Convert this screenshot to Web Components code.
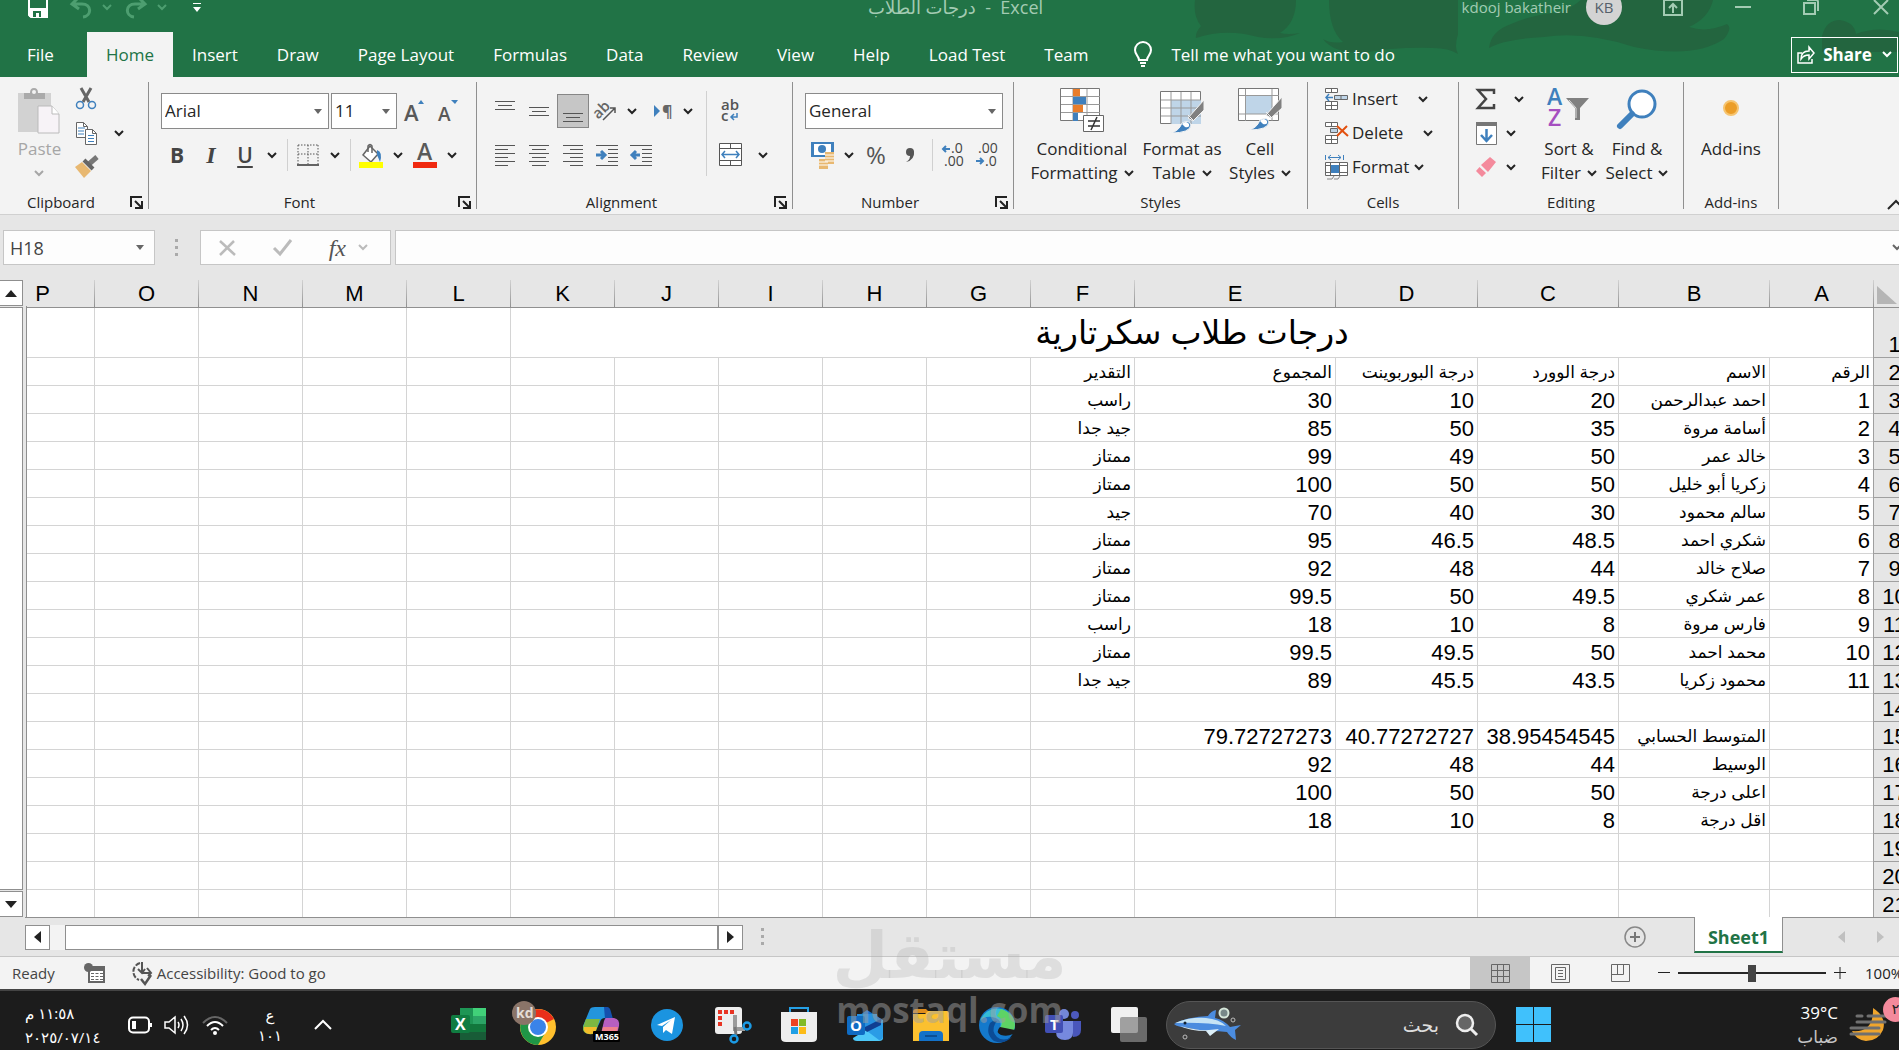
<!DOCTYPE html>
<html lang="en">
<head>
<meta charset="utf-8">
<title>درجات الطلاب - Excel</title>
<style>
    html, body { margin: 0; height: 100%; overflow: hidden; }
    body {
        display: flex;
        flex-direction: column;
        position: relative;
        background: #e6e6e6;
        color: #262626;
        font: 17px/24px "Open Sans", "Noto Sans", "DejaVu Sans", sans-serif;
    }
    work-sheet { flex: 1; min-height: 0; }
</style>
</head>
<body>
<excel-header></excel-header>
<excel-ribbon></excel-ribbon>
<formula-bar cell="H18"></formula-bar>
<work-sheet></work-sheet>
<sheet-tabs>Sheet1</sheet-tabs>
<status-bar></status-bar>
<task-bar></task-bar>
<water-mark></water-mark>

<script>
// name: [width, height, svg content]
const ICONS = {
    chevron: [10, 7, '<path d="M1 1l4 4 4-4" fill="none" stroke="currentColor" stroke-width="2"/>'],
    up: [18, 11, '<path d="M1 10l8-8 8 8" fill="none" stroke="currentColor" stroke-width="2"/>'],
    triangle: [8, 5, '<path d="M0 0h8L4 5z" fill="currentColor"/>'],
    triup: [12, 7, '<path d="M0 7h12L6 0z" fill="#222"/>'],
    tridown: [12, 7, '<path d="M0 0h12L6 7z" fill="#222"/>'],
    trileft: [7, 12, '<path d="M7 0v12L0 6z" fill="currentColor"/>'],
    triright: [7, 12, '<path d="M0 0v12l7-6z" fill="currentColor"/>'],
    launcher: [13, 13, '<path d="M1 11V1h11M5 5l6 6M12 5v7H5" fill="none" stroke="#222" stroke-width="2"/>'],
    dots: [3, 18, '<path d="M0 0h3v3H0zM0 7h3v3H0zM0 14h3v3H0z" fill="#aaa"/>'],
    save: [20, 22, '<path d="M1 1h18v20H3l-2-2z" fill="none" stroke="#fff" stroke-width="2"/><path d="M1 12h18v9H1z" fill="#fff"/><path d="M5 15h8v6h-2v-4H8v4H5z" fill="#217346"/>'],
    undo: [22, 22, '<path d="M9 1L2 8l7 5M3 8h9c10 0 10 12 1 13" fill="none" stroke="#4d9e70" stroke-width="3"/>'],
    redo: [22, 22, '<path d="M13 1l7 7-7 5M19 8h-9C0 8 0 20 9 21" fill="none" stroke="#4d9e70" stroke-width="3"/>'],
    custom: [8, 9, '<path d="M0 0h8v1H0zM0 4h8L4 9z" fill="#fff"/>'],
    ribbonopt: [20, 17, '<path d="M1 1h18v15H1zM10 14V6M6 9l4-4 4 4" fill="none" stroke="#a3cbb3" stroke-width="2"/>'],
    minimize: [16, 2, '<path d="M0 0h16v2H0z" fill="#a3cbb3"/>'],
    restore: [16, 16, '<path d="M1 4h11v11H1zM4 1h9q2 0 2 2v9" fill="none" stroke="#a3cbb3" stroke-width="2"/>'],
    close: [16, 16, '<path d="M1 1l14 14M15 1L1 15" fill="none" stroke="#a3cbb3" stroke-width="2"/>'],
    bulb: [18, 25, '<path d="M5 18c0-4-4-5-4-10a8 8 0 0 1 16 0c0 5-4 6-4 10zM6 21h6M7 24h4" fill="none" stroke="#fff" stroke-width="2"/>'],
    share: [18, 18, '<path d="M5 7H1v10h14v-4M4 13c0-5 3-8 8-8V1l5 6-5 6V9c-4 0-6 1-8 4z" fill="none" stroke="#fff" stroke-width="1.5"/>'],
    paste: [42, 46, '<path d="M0 5h33v39H0z" fill="#d2d2d2"/><path d="M6 11V5h6q0-5 4-5t4 5h7v6z" fill="#aaa"/><circle cx="16" cy="4" r="2" fill="#f3f3f3"/><path d="M20 18h14l7 8v19H20z" fill="#f7f3f7" stroke="#bbb"/><path d="M34 18v8h7" fill="#fff" stroke="#bbb"/>'],
    cut: [20, 22, '<path d="M5 0l8 14M15 0L7 14" stroke="#666" stroke-width="3"/><circle cx="4" cy="17" r="3.5" fill="none" stroke="#3f80bd" stroke-width="1.5"/><circle cx="16" cy="17" r="3.5" fill="none" stroke="#3f80bd" stroke-width="1.5"/>'],
    copy: [21, 23, '<path d="M.5.5h7l4 4v11H.5z" fill="#fff" stroke="#666"/><path d="M7.500.5v4h4" fill="none" stroke="#666"/><path d="M2 6h7M2 9h6M2 12h6" stroke="#3f80bd"/><path d="M9.500 7.500h7l4 4v11h-11z" fill="#fff" stroke="#666"/><path d="M16.500 7.500v4h4" fill="none" stroke="#666"/><path d="M12 13.500h6M12 16.500h6M12 19.500h6" stroke="#3f80bd"/>'],
    brush: [23, 22, '<path d="M22 1l-8 7" stroke="#777" stroke-width="5"/><path d="M9 4l9 9" stroke="#666" stroke-width="4"/><path d="M0 11l7-5 9 9-7 7z" fill="#e8b871"/>'],
    grow: [20, 22, '<text x="0" y="21" font-size="22" font-weight="600" fill="#595959">A</text><path d="M14 4h6l-3-4z" fill="#3f80bd"/>'],
    shrink: [20, 22, '<text x="0" y="21" font-size="19" font-weight="600" fill="#595959">A</text><path d="M13 0h7l-3 4z" fill="#3f80bd"/>'],
    borders: [22, 22, '<path d="M1 1h20M1 10h20M1 1v19M11 1v19M21 1v19" fill="none" stroke="#555" stroke-dasharray="1.500 1.500"/><path d="M0 21h22" stroke="#333" stroke-width="1.500"/>'],
    fill: [24, 25, '<path d="M11 3l8 8-7 8-8-7z" fill="#fff" stroke="#666" stroke-width="1.500"/><path d="M9 9V3q2-3 4 0v7" fill="none" stroke="#666" stroke-width="1.500"/><path d="M18 7q6 2 3 12-2-5-3-7z" fill="#3f80bd"/><path d="M0 19h24v6H0z" fill="#ff0"/>'],
    fontcolor: [24, 25, '<text x="4" y="17" font-size="23" font-weight="600" fill="#595959">A</text><path d="M0 19h24v6H0z" fill="#f0290f"/>'],
    top: [20, 36, '<path d="M0 8.500h20M3 12.500h14M0 16.500h20" stroke="#555"/>'],
    middle: [20, 36, '<path d="M0 14.500h20M3 18.500h14M0 22.500h20" stroke="#555"/>'],
    bottom: [20, 34, '<path d="M0 19.500h20M3 23.500h14M0 27.500h20" stroke="#555"/>'],
    left: [20, 22, '<path d="M0 1.500h20M0 5.500h13M0 9.500h20M0 13.500h13M0 17.500h20M0 21.500h13" stroke="#555"/>'],
    center: [20, 22, '<path d="M0 1.500h20M3 5.500h14M0 9.500h20M3 13.500h14M0 17.500h20M3 21.500h14" stroke="#555"/>'],
    right: [20, 22, '<path d="M0 1.500h20M7 5.500h13M0 9.500h20M7 13.500h13M0 17.500h20M7 21.500h13" stroke="#555"/>'],
    indent: [22, 22, '<path d="M0 1.500h22M12 5.500h10M12 9.500h10M12 13.500h10M12 17.500h10M0 21.500h22" stroke="#555"/><path d="M0 11h8M5 7l4 4-4 4" fill="none" stroke="#3f80bd" stroke-width="3"/>'],
    outdent: [22, 22, '<path d="M0 1.500h22M12 5.500h10M12 9.500h10M12 13.500h10M12 17.500h10M0 21.500h22" stroke="#555"/><path d="M2 11h8M6 7l-4 4 4 4" fill="none" stroke="#3f80bd" stroke-width="3"/>'],
    orient: [22, 22, '<text transform="rotate(-45 8 14)" x="0" y="14" font-size="15" font-weight="600" fill="#666">ab</text><path d="M7 20L19 8M14 8h5v5" fill="none" stroke="#555" stroke-width="1.500"/>'],
    direction: [18, 15, '<path d="M0 1v12l6-6z" fill="#3f80bd"/><text x="8" y="13" font-size="16" font-weight="700" fill="#666">¶</text>'],
    wrap: [18, 24, '<text x="0" y="11" font-size="15" font-weight="600" fill="#555">ab</text><text x="0" y="22" font-size="15" font-weight="600" fill="#555">c</text><path d="M16 14v4h-5M13 15l-3 3 3 3" fill="none" stroke="#3f80bd" stroke-width="1.500"/>'],
    merge: [23, 24, '<path d="M.5.500h22v22H.5zM.5 5.500h22M.5 17.500h22M11.500.500v5M11.500 17.500v5" fill="#fff" stroke="#555"/><path d="M3 11.500h17M6 8l-3 3.500L6 15M17 8l3 3.500-3 3.500" fill="none" stroke="#3f80bd" stroke-width="1.500"/>'],
    currency: [23, 28, '<path d="M0 1h23v15H0z" fill="#3f80bd"/><path d="M3 3h17v11H3z" fill="#fff"/><circle cx="11" cy="8" r="4" fill="#3f80bd"/><path d="M14 11h9v12h-9zM8 18h9v10H8z" fill="#e8b871"/><path d="M14 14h9M14 17h9M14 20h9M8 21h9M8 24h9" stroke="#fff"/>'],
    percent: [20, 22, '<text x="0" y="20" font-size="24" font-weight="400" fill="#555">%</text>'],
    comma: [10, 16, '<circle cx="5" cy="5" r="4" fill="#555"/><path d="M9 4q1 9-8 11 5-3 4-8z" fill="#555"/>'],
    incdec: [22, 24, '<path d="M1 6h7M4 3L1 6l3 3" fill="none" stroke="#3f80bd" stroke-width="2"/><text x="9" y="10" font-size="14" fill="#444">.0</text><text x="2" y="23" font-size="14" fill="#444">.00</text>'],
    decdec: [22, 24, '<path d="M0 18h7M4 15l3 3-3 3" fill="none" stroke="#3f80bd" stroke-width="2"/><text x="2" y="10" font-size="14" fill="#444">.00</text><text x="9" y="23" font-size="14" fill="#444">.0</text>'],
    conditional: [44, 45, '<path d="M.5.500h39v32H.5z" fill="#fff" stroke="#777"/><path d="M13 1v32M27 1v32M1 8.500h39M1 16.500h39M1 24.500h39" stroke="#999"/><path d="M13 1h7v7h-7zM13 17h10v7H13z" fill="#e87d2b"/><path d="M13 9h13v7H13zM13 25h5v8h-5z" fill="#3f80bd"/><path d="M23.500 27.500h20v16h-20z" fill="#fff" stroke="#666"/><path d="M28 33h12M28 38h12M37 29l-6 13" stroke="#333" stroke-width="1.500"/>'],
    table: [45, 45, '<path d="M.5 3.500h40v32H.5z" fill="#fff" stroke="#777"/><path d="M11 12h30v24H11z" fill="#bfd5e8"/><path d="M11 4v32M21 4v32M31 4v32M1 12h40M1 20h40M1 28h40" stroke="#999"/><path d="M44 12L28 30l5 3L44 22z" fill="#808080" stroke="#f3f3f3"/><path d="M28 27l6 6" stroke="#f3f3f3"/><path d="M11 45q8-2 11-10 7-4 9 2-1 8-20 8z" fill="#3f80bd" stroke="#f3f3f3"/><path d="M22 36q4-4 7 0 1 4-4 3z" fill="#fff"/>'],
    cellstyle: [45, 45, '<path d="M.5.500h40v32H.5z" fill="#fff" stroke="#777"/><path d="M8 8h26v18H8z" fill="#bfd5e8"/><path d="M7.500 1v32M34 1v32M1 7.500h40M1 26h40" stroke="#999"/><path d="M44 9L28 27l5 3L44 20z" fill="#808080" stroke="#f3f3f3"/><path d="M28 24l6 6" stroke="#f3f3f3"/><path d="M11 42q8-2 11-10 7-4 9 2-1 8-20 8z" fill="#3f80bd" stroke="#f3f3f3"/><path d="M22 33q4-4 7 0 1 4-4 3z" fill="#fff"/>'],
    insert: [23, 23, '<path d="M.5.500h12v4H.5zM6.500.500v4M.5 13.500h12v8H.5zM6.500 13.500v8M.5 17.500h12" fill="#fff" stroke="#666"/><path d="M9.500 7.500h13v4h-13zM16 7.500v4" fill="#bfd5e8" stroke="#666"/><path d="M1 9.500h7M4 6L1 9.500 4 13" fill="none" stroke="#3f80bd" stroke-width="1.500"/>'],
    remove: [23, 23, '<path d="M.5.500h12v4H.5zM6.500.500v4M.5 13.500h12v8H.5zM6.500 13.500v8M.5 17.500h12" fill="#fff" stroke="#666"/><path d="M5.500 6.500h7v4h-7z" fill="#bfd5e8" stroke="#666"/><path d="M12 4l11 10M22 4L12 14" stroke="#e2500f" stroke-width="2"/>'],
    format: [23, 25, '<path d="M.5 0v5M18.500 0v5M3 2.500h13M6 0L3 2.500 6 5M13 0l3 2.500L13 5" fill="none" stroke="#3f80bd"/><path d="M.5 7.500h22v13H.5zM5.500 7.500v13M14.500 7.500v13M.5 10.500h22M.5 17.500h22" fill="#fff" stroke="#666"/><path d="M6 10h8v8H6z" fill="#3f80bd"/><path d="M2 24h5l2-3M9 24h4l2-3" fill="none" stroke="#888"/>'],
    sum: [18, 20, '<path d="M17 5V1H1l8 9-8 9h16v-4" fill="none" stroke="#444" stroke-width="2.500"/>'],
    filldown: [21, 23, '<path d="M.5.500h20v22H.5z" fill="#fff" stroke="#777"/><path d="M0 0h21v4H0z" fill="#777"/><path d="M10.500 7v11M5 13l5.500 6 5.500-6" fill="none" stroke="#3f80bd" stroke-width="2.500"/>'],
    eraser: [21, 20, '<path d="M14 0l6 5-8 10-7-7zM3.500 10l6.500 6-4 4-6-6z" fill="#f48a9c"/>'],
    sort: [43, 40, '<text x="0" y="17" font-size="23" fill="#3f80bd" font-weight="600">A</text><text x="1" y="38" font-size="23" fill="#a64fc0" font-weight="600">Z</text><path d="M19 10h23L33 20v12h-5V20z" fill="#808080"/><path d="M22 12l7 8v10" fill="none" stroke="#ddd"/>'],
    find: [42, 42, '<circle cx="26" cy="16" r="13" fill="#fff" stroke="#3f80bd" stroke-width="3"/><path d="M16 26L4 38" stroke="#3f80bd" stroke-width="6" stroke-linecap="round"/>'],
    addin: [16, 16, '<circle cx="8" cy="8" r="7" fill="#eb9d27" stroke="#f6c46f" stroke-width="2"/>'],
    cross: [18, 16, '<path d="M1 1l15 14M15 1L1 15" stroke="#bbb" stroke-width="2.500"/>'],
    check: [20, 17, '<path d="M1 9l6 6L18 1" fill="none" stroke="#bbb" stroke-width="3"/>'],
    macro: [21, 20, '<path d="M4 3h17v17H4z" fill="#666"/><path d="M6 8h13v10H6z" fill="#fff"/><path d="M7 10.500h12M7 13.500h12M7 16.500h12" stroke="#666" stroke-dasharray="3 1.500"/><circle cx="4.500" cy="4.500" r="4.500" fill="#666"/>'],
    access: [21, 24, '<path d="M8 2A9 9 0 0 0 7 19" fill="none" stroke="#555" stroke-width="2" stroke-dasharray="5 1.500"/><path d="M10 1v11M6 8l4 4 3-4M10 12h9M15 7l4 5-3 3" fill="none" stroke="#555" stroke-width="2"/><path d="M9 18l4 5 6-9" fill="none" stroke="#555" stroke-width="2.500"/>'],
    plus: [22, 22, '<circle cx="11" cy="11" r="10" fill="none" stroke="#888" stroke-width="1.500"/><path d="M11 6v10M6 11h10" stroke="#777" stroke-width="2"/>'],
    normal: [19, 19, '<path d="M.5.500h18v18H.5zM6.500.500v18M12.500.500v18M.5 6.500h18M.5 12.500h18" fill="none" stroke="#666"/>'],
    pagelayout: [19, 19, '<path d="M.5.500h18v18H.5zM4.500 3.500h10v12h-10zM7 6.500h5M7 9.500h5M7 12.500h5" fill="none" stroke="#666"/>'],
    pagebreak: [19, 19, '<path d="M.5.500h18v17H.5zM6.500.500v10M12.500.500v10M.5 10.500h12" fill="none" stroke="#666"/>'],
    battery: [24, 18, '<rect x="1" y="1.500" width="20" height="15" rx="4" fill="none" stroke="#fff" stroke-width="2"/><rect x="4" y="5" width="4" height="8" fill="#fff"/><path d="M22 7h2v4h-2z" fill="#fff"/>'],
    speaker: [26, 20, '<path d="M1 7h4l6-5v16l-6-5H1zM14 7q2 3 0 6M17 4q4 6 0 12M20 1q7 9 0 18" fill="none" stroke="#fff" stroke-width="1.500"/>'],
    wifi: [26, 20, '<path d="M1 8q12-12 24 0" fill="none" stroke="#666" stroke-width="2"/><path d="M5 11q8-8 16 0M9 15q4-4 8 0" fill="none" stroke="#fff" stroke-width="2"/><circle cx="13" cy="18" r="2" fill="#fff"/>'],
    excel: [36, 33, '<path d="M9 0h26v32H9z" fill="#1e9655"/><path d="M22 0h13v8H22z" fill="#41d179"/><path d="M22 8h13v8H22z" fill="#2ca566"/><path d="M9 16h13v8H9zM22 16h13v8H22z" fill="#12773c"/><path d="M9 24h26v8H9z" fill="#185c37"/><rect y="7" width="19" height="18" rx="2" fill="#107c41"/><text x="4" y="22" font-size="16" font-weight="700" fill="#fff">X</text>'],
    chrome: [44, 48, '<circle cx="25" cy="26" r="18" fill="#ffc02d"/><path d="M25 26L9 18a18 18 0 0 1 32 0z" fill="#e92f1a"/><path d="M25 26L9 18a18 18 0 0 0 16 26l7-12z" fill="#1f9646"/><circle cx="25" cy="26" r="10" fill="#fff"/><circle cx="25" cy="26" r="8" fill="#3a83e8"/><circle cx="11" cy="12" r="12" fill="#8a7468"/><text x="3" y="17" font-size="14" font-weight="700" fill="#e5dcd6">kd</text>'],
    copilot: [37, 36, '<path d="M7 2q1-2 5-2h10q4 0 5 5l2 6h-7q-4 0-5 4l-4 8q-1 4-6 4-7 0-7-8z" fill="#2395dd"/><path d="M3 12h14l-4 12q-2 4-7 3-7-1-6-7z" fill="#7cb842"/><path d="M1 20h13q-2 8-8 7-6-1-5-7z" fill="#f3bd2b"/><path d="M21 0h3q3 0 4 5l2 7h-8z" fill="#1550ae"/><path d="M23 11h8q6 1 5 8l-2 8H18l3-13q1-3 2-3z" fill="#b75fc1"/><path d="M20 20h15l-2 8H18z" fill="#f0808d"/><rect x="10" y="24" width="27" height="11" rx="1" fill="#000"/><text x="12" y="33" font-size="9" font-weight="700" fill="#fff">M365</text>'],
    telegram: [32, 32, '<circle cx="16" cy="16" r="16" fill="#1b94e0"/><path d="M6 16l18-8-3 17-6-4-3 3v-6l8-7-9 6z" fill="#fff"/>'],
    snip: [37, 36, '<rect x="0" y="0" width="27" height="27" rx="3" fill="#eee"/><path d="M5 19V5h14" fill="none" stroke="#e83423" stroke-width="4" stroke-dasharray="4 2"/><path d="M20 8v14h10" fill="none" stroke="#9b9b9b" stroke-width="4"/><path d="M20 20l1 8" stroke="#777" stroke-width="3"/><circle cx="32" cy="19" r="3.500" fill="none" stroke="#1b9ae4" stroke-width="2.500"/><circle cx="19" cy="32" r="3.500" fill="none" stroke="#1b9ae4" stroke-width="2.500"/>'],
    store: [36, 36, '<path d="M9 6V1h18v5" fill="none" stroke="#25a0e6" stroke-width="2"/><path d="M0 5h36v26q0 4-5 4H5q-5 0-5-4z" fill="#eee"/><path d="M10 12h7v7h-7z" fill="#ee4322"/><path d="M18 12h7v7h-7z" fill="#82ba26"/><path d="M10 20h7v7h-7z" fill="#1f9fe5"/><path d="M18 20h7v7h-7z" fill="#fcbb17"/>'],
    outlook: [36, 34, '<path d="M6 12L20 2l16 10v8H6z" fill="#1572cf"/><path d="M10 6h20v14H10z" fill="#2790df"/><path d="M36 12v18q0 3-4 3H10q-4 0-4-3z" fill="#4dc8f8"/><path d="M36 12L20 23l12 9q4 0 4-4z" fill="#2a9ce6"/><path d="M16 20l18-9v6L20 24z" fill="#103f92"/><rect y="8" width="18" height="19" rx="2" fill="#0f6cc4"/><text x="3" y="23" font-size="15" font-weight="700" fill="#fff">O</text>'],
    folder: [36, 34, '<path d="M0 4q0-3 3-3h10l4 4H0z" fill="#e08d1c"/><path d="M0 6h12l3-3h19q2 0 2 2v28H0z" fill="#fbc02f"/><path d="M6 33v-6q0-4 4-4h16q4 0 4 4v6z" fill="#1371c8"/><path d="M12 28h12" stroke="#0c4f94" stroke-width="2"/>'],
    edge: [36, 36, '<circle cx="18" cy="18" r="18" fill="#1479cc"/><path d="M1 14A18 18 0 0 1 36 17q0 9-9 9-8 0-6-5 3-9-8-11-8-1-12 4z" fill="#35bcd6"/><path d="M22 2q14 5 14 16 0 8-9 8-7 0-6-5 5-8-3-12z" fill="#5ed365"/><path d="M16 17q-4 7 2 13 6 5 15 0-8 8-18 4-9-7-4-18 3-3 7-2z" fill="#0b4c96"/><path d="M21 20q-5 5 1 8 6 2 12-1l2 1v-5z" fill="#1c1c1c"/>'],
    teams: [37, 34, '<circle cx="19" cy="6" r="5" fill="#7387d8"/><circle cx="30" cy="7" r="4" fill="#4d59bd"/><path d="M24 13h12v9q0 7-8 7z" fill="#4956bb"/><path d="M11 13h17v11q0 8-8 8-9 0-9-8z" fill="#7689de"/><rect y="7" width="18" height="18" rx="2" fill="#414fb5"/><text x="5" y="22" font-size="15" font-weight="700" fill="#fff">T</text>'],
    taskview: [36, 36, '<rect width="27" height="26" rx="2" fill="#f0f0f0"/><rect x="9" y="10" width="27" height="25" rx="2" fill="#858585" opacity=".75"/>'],
    shark: [68, 38, '<path d="M0 18q12-7 34-8 3-5 8-6l-1 8q9 2 15 9l11-2-6 5 1 10q-6-3-9-8-9-1-15-1-14 0-23-3Q3 21 0 18z" fill="#4b8cdf"/><path d="M1 17q14-6 31-5 13 1 20 8-20-4-51-3z" fill="#c5e3f5"/><path d="M6 20q18 5 29 4l10-1-9 7-4-5q-16 0-26-5z" fill="#dceef8"/><circle cx="11" cy="17" r="1.500" fill="#123"/><circle cx="50" cy="7" r="4.500" fill="#788" stroke="#d5e6d9" stroke-width="2"/><circle cx="59" cy="14" r="2" fill="none" stroke="#bbb"/><circle cx="11" cy="31" r="2" fill="none" stroke="#bbb"/>'],
    search: [24, 24, '<circle cx="10" cy="10" r="8" fill="#666" stroke="#eee" stroke-width="2.500"/><path d="M16 16l6 6" stroke="#eee" stroke-width="3"/>'],
    windows: [35, 35, '<path d="M0 0h17v17H0zM18 0h17v17H18zM0 18h17v17H0zM18 18h17v17H18z" fill="#40c1fc"/>'],
    fog: [36, 36, '<path d="M22 1q14 9 10 22-5 11-17 11-10-1-14-10 22 2 21-23z" fill="#f0a52c"/><path d="M6 9h5M17 9h17M6 15h28M0 21h28M0 27h28" stroke="#707070" stroke-width="3" stroke-linecap="round"/>']
};

class UiIcon extends HTMLElement {
    constructor() {
        super();
        this.attachShadow({ mode: 'open' });
    }

    connectedCallback() {
        const [w, h, body] = ICONS[this.getAttribute('name')];
        this.shadowRoot.innerHTML = `
        <style>
            :host { display: inline-flex; flex: none; }
            svg { display: block; overflow: visible; }
        </style>
        <svg width="${w}" height="${h}" viewBox="0 0 ${w} ${h}" aria-hidden="true">${body}</svg>
        `;
    }
}
customElements.define('ui-icon', UiIcon);

const RESET = `
    button { font: inherit; color: inherit; background: none; border: 0; padding: 0; margin: 0; display: flex; align-items: center; justify-content: center; }
    input, select { font: inherit; color: inherit; border: 0; border-radius: 0; margin: 0; outline: 0; box-sizing: border-box; min-width: 0; }
`;

// Small ribbon button; "arrow" adds the drop-down part
class ToolButton extends HTMLElement {
    constructor() {
        super();
        this.attachShadow({ mode: 'open' });
    }

    connectedCallback() {
        const icon = this.getAttribute('icon');
        const label = this.getAttribute('label') || icon;
        this.shadowRoot.innerHTML = `
        <style>
            ${RESET}
            :host { display: inline-flex; flex: none; height: 36px; align-items: center; }
            .main { width: 34px; height: 34px; }
            .more { width: var(--arrow, 20px); height: 34px; color: #222; }
            :host([selected]) .main { width: 32px; margin: 0 1px; background: #c6c6c6; outline: 1px solid #868686; outline-offset: -1px; }
        </style>
        <button class="main" type="button" aria-label="${label}">${icon ? `<ui-icon name="${icon}"></ui-icon>` : '<slot></slot>'}</button>
        ${this.hasAttribute('arrow') ? `<button class="more" type="button" aria-label="${label} options"><ui-icon name="chevron"></ui-icon></button>` : ''}
        `;
    }
}
customElements.define('tool-button', ToolButton);

// Tall ribbon button with an icon on top and one or two lines of text
class BigButton extends HTMLElement {
    constructor() {
        super();
        this.attachShadow({ mode: 'open' });
    }

    connectedCallback() {
        const arrow = this.hasAttribute('arrow') ? '<ui-icon name="chevron"></ui-icon>' : '';
        this.shadowRoot.innerHTML = `
        <style>
            ${RESET}
            :host { display: flex; flex: none; justify-content: center; padding-top: 6px; }
            button { flex-direction: column; justify-content: flex-start; white-space: nowrap; }
            .pic { height: 49px; display: flex; }
            :host([center]) .pic { align-items: center; height: 40px; padding-bottom: 9px; }
            .line { height: 24px; display: flex; align-items: center; gap: 6px; }
        </style>
        <button type="button">
            <span class="pic"><ui-icon name="${this.getAttribute('icon')}"></ui-icon></span>
            <span class="line"><slot></slot></span>
            <span class="line"><slot name="second"></slot>${arrow}</span>
        </button>
        `;
    }
}
customElements.define('big-button', BigButton);

class RibbonGroup extends HTMLElement {
    constructor() {
        super();
        this.attachShadow({ mode: 'open' });
    }

    connectedCallback() {
        this.shadowRoot.innerHTML = `
        <style>
            ${RESET}
            :host { display: flex; flex-direction: column; flex: none; box-sizing: border-box; margin-top: 5px; border: 0 solid; border-right-width: 1px; border-image: linear-gradient(#8f8f8f 126px, transparent 126px) 1; }
            .body { flex: 1; display: flex; min-height: 0; }
            .foot { display: flex; align-items: center; height: 24px; padding: 0 5px; font-size: 15px; line-height: 20px; }
            .foot span { flex: 1; text-align: center; }
            .foot button { margin-left: 13px; }
        </style>
        <div class="body"><slot></slot></div>
        <div class="foot">
            <span>${this.getAttribute('label')}</span>
            ${this.hasAttribute('launcher') ? '<button type="button" aria-label="More settings"><ui-icon name="launcher"></ui-icon></button>' : ''}
        </div>
        `;
    }
}
customElements.define('ribbon-group', RibbonGroup);

class ComboBox extends HTMLElement {
    constructor() {
        super();
        this.attachShadow({ mode: 'open' });
    }

    connectedCallback() {
        this.shadowRoot.innerHTML = `
        <style>
            ${RESET}
            :host { display: grid; flex: none; box-sizing: border-box; height: 36px; background: #fff; border: 1px solid #8a8a8a; align-items: center; }
            select, ui-icon { grid-area: 1 / 1; }
            select { appearance: none; width: 100%; height: 34px; padding: 0 3px; background: none; }
            ui-icon { justify-self: end; margin-right: 6px; color: #666; pointer-events: none; }
        </style>
        <select aria-label="${this.getAttribute('label')}"><option>${this.getAttribute('value')}</option></select>
        <ui-icon name="triangle"></ui-icon>
        `;
    }
}
customElements.define('combo-box', ComboBox);

class ExcelHeader extends HTMLElement {
    constructor() {
        super();
        this.attachShadow({ mode: 'open' });
        this.tabs = ['File', 'Home', 'Insert', 'Draw', 'Page Layout', 'Formulas', 'Data', 'Review', 'View', 'Help', 'Load Test', 'Team'];
    }

    connectedCallback() {
        this.render();
    }

    render() {
        this.shadowRoot.innerHTML = `
        <style>
            ${RESET}
            :host { display: block; flex: none; position: relative; overflow: hidden; background: #217346; color: #fff; }
            .art { position: absolute; top: 0; right: 0; }
            .title { position: relative; display: grid; grid-template-columns: 1fr auto 1fr; align-items: center; height: 50px; margin-top: -18px; padding-left: 12px; color: #a3cbb3; font-size: 15px; }
            .quick { display: flex; align-items: center; padding-left: 16px; gap: 10px; }
            .quick .undo { margin-left: 12px; }
            .quick .redo { margin-left: 3px; }
            .quick .custom { margin-left: 16px; }
            .quick ui-icon[name=chevron] { color: #4d9e70; }
            h1 { margin: 0; font: inherit; font-size: 18px; white-space: pre; }
            .account { display: flex; align-items: center; justify-content: flex-end; }
            .avatar { width: 36px; height: 36px; border-radius: 50%; background: #d3d3d3; color: #55606b; display: grid; place-items: center; margin: 0 41px 0 15px; }
            .account button + button { margin-left: 52px; }
            .account button:last-child { margin-right: 10px; margin-left: 54px; }
            .bar { position: relative; display: flex; align-items: center; height: 45px; }
            nav { display: flex; align-self: stretch; }
            nav a { display: flex; align-items: center; padding: 0 20px 0 19px; color: #fff; text-decoration: none; white-space: nowrap; }
            nav a:first-child { padding: 0 33px 0 27px; }
            nav a.on { background: #f3f3f3; color: #217346; padding: 0 19px; }
            .tell { gap: 19px; margin-left: 26px; }
            .share { margin-left: auto; margin-right: 1px; box-sizing: border-box; width: 107px; height: 36px; border: 1px solid #fff; font-weight: 700; gap: 8px; }
            .share ui-icon[name=chevron] { margin-left: 2px; }
        </style>
        <svg class="art" width="720" height="77" viewBox="1179 0 720 77" fill="#23653f" aria-hidden="true">
            <path d="M1195 0q-2 16 6 26-6 7-5 12 30-10 62-1 24 4 42-4-12 2-20 0 16-10 16-33z"/>
            <path d="M1329 0q0 30 14 42-12 2-20-3 10 14 40 14 30-6 70-5 16 0 25 6-4-7 0-20V0z"/>
            <path d="M1489 48q2-17 22-24 20-9 50-12 10-4 20-12h132q-4 18-24 27 18 6 38-3 6 4-3 15-30 20-90 8-50-16-90-10-40 2-55 11z"/>
            <path d="M1822 36q4-16 18-16 14 2 16 14 20-8 43-2v20h-77zM1490 0h-20q20 10 20 0z"/>
        </svg>
        <div class="title">
            <div class="quick">
                <button type="button" aria-label="Save"><ui-icon name="save"></ui-icon></button>
                <button type="button" aria-label="Undo" class="undo"><ui-icon name="undo"></ui-icon></button><ui-icon name="chevron"></ui-icon>
                <button type="button" aria-label="Redo" class="redo"><ui-icon name="redo"></ui-icon></button><ui-icon name="chevron"></ui-icon>
                <button type="button" aria-label="Customize" class="custom"><ui-icon name="custom"></ui-icon></button>
            </div>
            <h1><bdi>درجات الطلاب</bdi>  -  Excel</h1>
            <div class="account">
                <span>kdooj bakatheir</span><span class="avatar">KB</span>
                ${['ribbonopt', 'minimize', 'restore', 'close'].map(n => `<button type="button" aria-label="${n}"><ui-icon name="${n}"></ui-icon></button>`).join('')}
            </div>
        </div>
        <div class="bar">
            <nav>${this.tabs.map(t => `<a href="#"${t === 'Home' ? ' class="on"' : ''}>${t}</a>`).join('')}</nav>
            <button type="button" class="tell"><ui-icon name="bulb"></ui-icon>Tell me what you want to do</button>
            <button type="button" class="share"><ui-icon name="share"></ui-icon>Share<ui-icon name="chevron"></ui-icon></button>
        </div>
        `;
    }
}
customElements.define('excel-header', ExcelHeader);

class ExcelRibbon extends HTMLElement {
    constructor() {
        super();
        this.attachShadow({ mode: 'open' });
    }

    connectedCallback() {
        this.shadowRoot.innerHTML = `
        ${this.getStyles()}
        <ribbon-group label="Clipboard" launcher class="clipboard">
            <big-button icon="paste" arrow class="paste">Paste</big-button>
            <div class="stack">
                <tool-button icon="cut"></tool-button>
                <tool-button icon="copy" arrow class="wide"></tool-button>
                <tool-button icon="brush"></tool-button>
            </div>
        </ribbon-group>
        <ribbon-group label="Font" launcher class="font">
            <div class="rows">
                <div class="row">
                    <combo-box class="family" label="Font" value="Arial"></combo-box>
                    <combo-box class="size" label="Font size" value="11"></combo-box>
                    <tool-button icon="grow"></tool-button><tool-button icon="shrink"></tool-button>
                </div>
                <div class="row">
                    <tool-button label="Bold"><b>B</b></tool-button>
                    <tool-button label="Italic"><i>I</i></tool-button>
                    <tool-button label="Underline" arrow><u>U</u></tool-button>
                    <hr>
                    <tool-button icon="borders" arrow></tool-button>
                    <hr>
                    <tool-button icon="fill" arrow></tool-button>
                    <tool-button icon="fontcolor" arrow></tool-button>
                </div>
            </div>
        </ribbon-group>
        <ribbon-group label="Alignment" launcher class="alignment">
            <div class="rows">
                <div class="row">
                    <tool-button icon="top"></tool-button><tool-button icon="middle"></tool-button>
                    <tool-button icon="bottom" selected></tool-button><tool-button icon="orient" arrow></tool-button>
                    <tool-button icon="direction" arrow class="dir"></tool-button>
                </div>
                <div class="row">
                    <tool-button icon="left"></tool-button><tool-button icon="center"></tool-button>
                    <tool-button icon="right"></tool-button><tool-button icon="indent"></tool-button>
                    <tool-button icon="outdent"></tool-button>
                </div>
            </div>
            <hr class="tall">
            <div class="rows">
                <tool-button icon="wrap"></tool-button>
                <tool-button icon="merge" arrow class="wide"></tool-button>
            </div>
        </ribbon-group>
        <ribbon-group label="Number" launcher class="number">
            <div class="rows">
                <combo-box label="Number format" value="General"></combo-box>
                <div class="row">
                    <tool-button icon="currency" arrow></tool-button>
                    <tool-button icon="percent"></tool-button><tool-button icon="comma"></tool-button>
                    <hr>
                    <tool-button icon="incdec"></tool-button><tool-button icon="decdec"></tool-button>
                </div>
            </div>
        </ribbon-group>
        <ribbon-group label="Styles" class="styles">
            <big-button icon="conditional" arrow>Conditional<span slot="second">Formatting</span></big-button>
            <big-button icon="table" arrow>Format as<span slot="second">Table</span></big-button>
            <big-button icon="cellstyle" arrow>Cell<span slot="second">Styles</span></big-button>
        </ribbon-group>
        <ribbon-group label="Cells" class="cells">
            <div class="list">
                <button type="button"><ui-icon name="insert"></ui-icon><span>Insert</span><ui-icon name="chevron"></ui-icon></button>
                <button type="button"><ui-icon name="remove"></ui-icon><span>Delete</span><ui-icon name="chevron"></ui-icon></button>
                <button type="button" class="tight"><ui-icon name="format"></ui-icon><span>Format</span><ui-icon name="chevron"></ui-icon></button>
            </div>
        </ribbon-group>
        <ribbon-group label="Editing" class="editing">
            <div class="stack">
                <tool-button icon="sum" arrow class="wide"></tool-button>
                <tool-button icon="filldown" arrow></tool-button>
                <tool-button icon="eraser" arrow></tool-button>
            </div>
            <big-button icon="sort" arrow>Sort &amp;<span slot="second">Filter</span></big-button>
            <big-button icon="find" arrow>Find &amp;<span slot="second">Select</span></big-button>
        </ribbon-group>
        <ribbon-group label="Add-ins" class="addins">
            <big-button icon="addin" center>Add-ins</big-button>
        </ribbon-group>
        <button type="button" class="collapse" aria-label="Collapse ribbon"><ui-icon name="up"></ui-icon></button>
        `;
    }

    getStyles() {
        return `
        <style>
            ${RESET}
            :host { display: flex; flex: none; height: 137px; overflow: hidden; background: #f3f3f3; border-bottom: 1px solid #d0d0d0; }
            .rows { display: flex; flex-direction: column; gap: 8px; padding-top: 11px; }
            .row { display: flex; align-items: center; }
            .stack { display: flex; flex-direction: column; height: 102px; justify-content: space-between; }
            .stack tool-button { height: 34px; }
            .wide { --arrow: 32px; }
            hr { width: 1px; height: 32px; margin: 0 3px 0 5px; border: 0; background: #d0d0d0; }
            hr.tall { height: 85px; margin: 9px 6px 0 10px; }
            b, i, u { font-size: 21px; font-weight: 700; color: #444; }
            i { font-family: "Liberation Serif", serif; font-size: 24px; }
            u { font-weight: 600; text-underline-offset: 3px; text-decoration-thickness: 2px; }
            .clipboard { width: 149px; }
            .paste { width: 69px; padding-left: 5px; color: #a6a6a6; margin-right: -5px; }
            .font { width: 328px; }
            .font .rows { padding-left: 12px; }
            .font .row:nth-child(2) { margin-left: -1px; }
            .family { width: 168px; margin-right: 2px; }
            .size { width: 66px; }
            .alignment { width: 316px; }
            .alignment .rows:first-child { padding-left: 11px; width: 208px; }
            .alignment .row:first-child { --arrow: 16px; }
            .dir { margin-left: 6px; }
            .number { width: 221px; }
            .number .rows { padding-left: 12px; }
            .number combo-box { width: 198px; }
            .number hr { margin: 0 3px 0 5px; }
            .styles { width: 294px; }
            .styles big-button:nth-child(1) { width: 136px; }
            .styles big-button:nth-child(2) { width: 64px; }
            .styles big-button:nth-child(3) { width: 92px; }
            .cells { width: 151px; }
            .list { padding-left: 17px; }
            .list button { height: 34px; }
            .list span { padding: 0 20px 0 4px; }
            .list .tight span { padding-right: 5px; }
            .editing { width: 225px; }
            .editing .stack { padding-left: 10px; width: 66px; --arrow: 16px; }
            .editing big-button { width: 68px; }
            .addins { width: 95px; }
            .addins big-button { width: 94px; }
            .collapse { margin: 122px -6px 0 auto; height: 11px; }
        </style>
        `;
    }
}
customElements.define('excel-ribbon', ExcelRibbon);

class FormulaBar extends HTMLElement {
    constructor() {
        super();
        this.attachShadow({ mode: 'open' });
    }

    connectedCallback() {
        this.shadowRoot.innerHTML = `
        <style>
            ${RESET}
            :host { display: flex; flex: none; box-sizing: border-box; height: 65px; padding: 15px 0 15px 3px; overflow: hidden; background: #e6e6e6; }
            .box { box-sizing: border-box; display: flex; align-items: center; height: 35px; background: #fdfdfd; border: 1px solid #c6c6c6; }
            .name { width: 152px; padding: 0 10px 0 6px; color: #444; font-size: 18px; }
            .name input { width: 100%; flex: 1; background: none; padding: 0; }
            .name ui-icon { color: #666; }
            .grip { margin: 9px 22px 0 20px; }
            .tools { width: 191px; padding: 0 22px 0 18px; justify-content: space-between; color: #bbb; }
            .fx { font: italic 24px/30px "Liberation Serif", serif; color: #555; gap: 12px; }
            .fx ui-icon { color: #bbb; }
            .formula { flex: 1; margin: 0 -20px 0 4px; padding-right: 16px; color: #666; }
            .formula input { flex: 1; background: none; }
        </style>
        <div class="box name"><input aria-label="Name box" value="${this.getAttribute('cell')}"><ui-icon name="triangle"></ui-icon></div>
        <ui-icon class="grip" name="dots"></ui-icon>
        <div class="box tools">
            <button type="button" aria-label="Cancel"><ui-icon name="cross"></ui-icon></button>
            <button type="button" aria-label="Enter"><ui-icon name="check"></ui-icon></button>
            <button type="button" class="fx" aria-label="Insert function">fx<ui-icon name="chevron"></ui-icon></button>
        </div>
        <div class="box formula"><input aria-label="Formula"><ui-icon name="chevron"></ui-icon></div>
        `;
    }
}
customElements.define('formula-bar', FormulaBar);

class WorkSheet extends HTMLElement {
    constructor() {
        super();
        this.attachShadow({ mode: 'open' });
        this.letters = 'ABCDEFGHIJKLMNOP'.split('');
        this.widths = this.letters.map((l, i) => [104, 151, 141, 142, 201][i] || 104);
        // A, B, C, D, E, F
        this.data = {
            2: ['الرقم', 'الاسم', 'درجة الوورد', 'درجة البوربوينت', 'المجموع', 'التقدير'],
            3: [1, 'احمد عبدالرحمن', 20, 10, 30, 'راسب'],
            4: [2, 'أسامة مروة', 35, 50, 85, 'جيد جدا'],
            5: [3, 'خالد عمر', 50, 49, 99, 'ممتاز'],
            6: [4, 'زكريا أبو خليل', 50, 50, 100, 'ممتاز'],
            7: [5, 'سالم محمود', 30, 40, 70, 'جيد'],
            8: [6, 'شكري احمد', 48.5, 46.5, 95, 'ممتاز'],
            9: [7, 'صلاح خالد', 44, 48, 92, 'ممتاز'],
            10: [8, 'عمر شكري', 49.5, 50, 99.5, 'ممتاز'],
            11: [9, 'فارس مروة', 8, 10, 18, 'راسب'],
            12: [10, 'محمد احمد', 50, 49.5, 99.5, 'ممتاز'],
            13: [11, 'محمود زكريا', 43.5, 45.5, 89, 'جيد جدا'],
            15: ['', 'المتوسط الحسابي', 38.95454545, 40.77272727, 79.72727273],
            16: ['', 'الوسيط', 44, 48, 92],
            17: ['', 'اعلى درجة', 50, 50, 100],
            18: ['', 'اقل درجة', 8, 10, 18]
        };
    }

    cell(value = '') {
        return typeof value === 'string' && value ? `<td class="ar">${value}</td>` : `<td>${value}</td>`;
    }

    rows() {
        const cols = this.letters.length;
        let html = `<tr><th class="num">1</th><td class="big" colspan="11">درجات طلاب سكرتارية</td>${'<td></td>'.repeat(cols - 11)}</tr>`;
        for (let r = 2; r <= 21; r++) {
            const values = this.data[r] || [];
            html += `<tr><th class="num">${r}</th>`;
            for (let c = 0; c < cols; c++) html += this.cell(values[c]);
            html += '</tr>';
        }
        return html;
    }

    connectedCallback() {
        const total = this.widths.reduce((sum, w) => sum + w, 42);
        this.shadowRoot.innerHTML = `
        <style>
            ${RESET}
            :host { display: flex; overflow: hidden; background: #e6e6e6; font: 22px/26px "Liberation Sans", "DejaVu Sans", sans-serif; color: #000; }
            .scroll { width: 23px; flex: none; display: flex; flex-direction: column; gap: 1px; }
            .scroll > * { box-sizing: border-box; width: 23px; background: #fff; border: 1px solid #8f8f8f; border-left: 0; }
            .scroll button { height: 26px; flex: none; justify-content: flex-start; padding-left: 5px; }
            .thumb { flex: 1; }
            .pane { flex: 1; margin: 0 -16px 0 3px; overflow: hidden; direction: rtl; border-left: 1px solid; border-image: linear-gradient(transparent 27px, #8f8f8f 27px) 1; }
            table { table-layout: fixed; border-collapse: separate; border-spacing: 0; width: ${total}px; direction: rtl; }
            th { font-weight: 400; padding: 0; background: #e6e6e6; text-align: center; box-sizing: border-box; }
            thead th { height: 28px; border: 0 solid; border-width: 0 0 1px 1px; border-image: linear-gradient(#d4d4d4, #8f8f8f) 1; }
            .all { width: 20px; height: 18px; margin: 3px 18px 0 0; background: #b5b5b5; clip-path: polygon(0 0, 0 100%, 100% 100%); }
            td { box-sizing: border-box; height: 28px; padding: 0 3px; background: #fff; border: 0 solid #d4d4d4; border-width: 0 0 1px 1px; text-align: right; vertical-align: bottom; white-space: nowrap; line-height: 25px; }
            .num { border: 1px solid #a0a0a0; border-width: 0 0 1px 1px; vertical-align: bottom; height: 28px; line-height: 25px; }
            .ar { font-size: 17px; }
            tr:first-child > .num, .big { height: 50px; }
            .big { font-size: 33px; line-height: 48px; text-align: center; vertical-align: middle; }
        </style>
        <div class="scroll">
            <button type="button" aria-label="Scroll up"><ui-icon name="triup"></ui-icon></button>
            <div class="thumb"></div>
            <button type="button" aria-label="Scroll down"><ui-icon name="tridown"></ui-icon></button>
        </div>
        <div class="pane">
            <table>
                <colgroup><col style="width:42px">${this.widths.map(w => `<col style="width:${w}px">`).join('')}</colgroup>
                <thead><tr><th><div class="all"></div></th>${this.letters.map(l => `<th>${l}</th>`).join('')}</tr></thead>
                <tbody>${this.rows()}</tbody>
            </table>
        </div>
        `;
    }
}
customElements.define('work-sheet', WorkSheet);

class SheetTabs extends HTMLElement {
    constructor() {
        super();
        this.attachShadow({ mode: 'open' });
    }

    connectedCallback() {
        this.shadowRoot.innerHTML = `
        <style>
            ${RESET}
            :host { display: flex; flex: none; box-sizing: border-box; height: 40px; background: #e6e6e6; border-bottom: 1px solid #c6c6c6; padding-left: 25px; }
            .line { display: flex; flex: 1; align-items: center; border-top: 1px solid #8f8f8f; }
            .step, .thumb { box-sizing: border-box; height: 25px; background: #fff; border: 1px solid #8f8f8f; }
            .step { width: 25px; color: #222; }
            .track { display: flex; flex: 0 1 718px; background: #f3f3f3; margin-right: 18px; }
            .thumb { flex: 1; margin-left: 15px; }
            .add { margin-left: auto; margin-right: 48px; }
            .tab { box-sizing: border-box; width: 89px; height: 36px; padding-top: 5px; background: #fff; border: 1px solid #8f8f8f; border-width: 0 1px 2px; border-bottom-color: #217346; color: #217346; font-size: 18px; font-weight: 700; }
            .nav { display: flex; flex: none; align-items: center; justify-content: space-between; box-sizing: border-box; width: 116px; padding: 0 15px 0 55px; border-top: 1px solid #8f8f8f; color: #c0c0c0; }
        </style>
        <div class="line">
            <div class="track">
                <button class="step" type="button" aria-label="Scroll left"><ui-icon name="trileft"></ui-icon></button>
                <div class="thumb"></div>
                <button class="step" type="button" aria-label="Scroll right"><ui-icon name="triright"></ui-icon></button>
            </div>
            <ui-icon name="dots"></ui-icon>
            <button class="add" type="button" aria-label="New sheet"><ui-icon name="plus"></ui-icon></button>
        </div>
        <button class="tab" type="button"><slot></slot></button>
        <div class="nav"><ui-icon name="trileft"></ui-icon><ui-icon name="triright"></ui-icon></div>
        `;
    }
}
customElements.define('sheet-tabs', SheetTabs);

class StatusBar extends HTMLElement {
    constructor() {
        super();
        this.attachShadow({ mode: 'open' });
    }

    connectedCallback() {
        this.shadowRoot.innerHTML = `
        <style>
            ${RESET}
            :host { display: flex; flex: none; align-items: center; height: 32px; padding-left: 12px; overflow: hidden; background: #f3f3f3; color: #444; font-size: 15px; white-space: nowrap; }
            .macro { margin: 0 27px 0 29px; }
            .access { gap: 4px; }
            .view { width: 60px; height: 32px; }
            .view.on { background: #c6c6c6; margin-left: auto; }
            .zoom { display: flex; align-items: center; gap: 8px; margin-left: 8px; color: #222; }
            .zoom button { width: 12px; height: 12px; }
            .zoom svg { display: block; }
            input { appearance: none; width: 148px; height: 18px; padding: 0; background: linear-gradient(#262626, #262626) center / 100% 2px no-repeat; }
            input::-webkit-slider-thumb { appearance: none; width: 8px; height: 17px; background: #444; border: 0; border-radius: 0; }
            .pct { margin-left: 11px; margin-right: -9px; width: 43px; }
        </style>
        <span>Ready</span>
        <ui-icon class="macro" name="macro"></ui-icon>
        <button type="button" class="access"><ui-icon name="access"></ui-icon>Accessibility: Good to go</button>
        <button type="button" class="view on" aria-label="Normal"><ui-icon name="normal"></ui-icon></button>
        <button type="button" class="view" aria-label="Page layout"><ui-icon name="pagelayout"></ui-icon></button>
        <button type="button" class="view" aria-label="Page break preview"><ui-icon name="pagebreak"></ui-icon></button>
        <div class="zoom">
            <button type="button" aria-label="Zoom out"><svg width="12" height="12"><path d="M0 5.500h12" stroke="#222"/></svg></button>
            <input type="range" aria-label="Zoom" min="0" max="200" value="100">
            <button type="button" aria-label="Zoom in"><svg width="12" height="12"><path d="M0 5.500h12M6 0v12" stroke="#222"/></svg></button>
            <span class="pct">100%</span>
        </div>
        `;
    }
}
customElements.define('status-bar', StatusBar);

class TaskBar extends HTMLElement {
    constructor() {
        super();
        this.attachShadow({ mode: 'open' });
        this.apps = ['excel', 'chrome', 'copilot', 'telegram', 'snip', 'store', 'outlook', 'folder', 'edge', 'teams', 'taskview'];
    }

    connectedCallback() {
        this.shadowRoot.innerHTML = `
        <style>
            ${RESET}
            :host { display: flex; flex: none; align-items: center; box-sizing: border-box; height: 61px; border-top: 2px solid #444; background: #1c1c1c; color: #fff; font-size: 16px; padding-top: 8px; overflow: hidden; }
            .clock { flex: none; width: 103px; padding-left: 25px; box-sizing: border-box; text-align: left; direction: ltr; font-size: 15px; white-space: nowrap; }
            .tray { display: flex; align-items: center; gap: 12px; margin-left: 25px; }
            .lang { margin: 0 31px 0 29px; width: 26px; text-align: center; line-height: 20px; font-size: 15px; }
            .apps { display: flex; margin-left: 104px; }
            .apps button { width: 66px; height: 44px; }
            .search { box-sizing: border-box; display: flex; align-items: center; width: 330px; height: 48px; margin: 0 20px 0 4px; padding: 0 16px 0 7px; border: 1px solid #555; border-radius: 24px; background: #3c3c3c; }
            .search input { flex: 1; width: 0; background: none; direction: rtl; padding: 0 16px; font-size: 19px; color: #ddd; }
            .search input::placeholder { color: #ddd; opacity: 1; }
            .weather { margin-left: auto; text-align: right; gap: 13px; font-size: 17px; }
            .weather small { display: block; font-size: 17px; color: #c4c4c4; }
            .badge { width: 25px; height: 25px; border-radius: 50%; background: #f48a9c; color: #222; display: grid; place-items: center; margin: -31px -9px 0 -4px; font-size: 14px; position: relative; }
        </style>
        <div class="clock"><bdi dir="rtl">١١:٥٨ م</bdi><br>٢٠٢٥/٠٧/١٤</div>
        <div class="tray"><ui-icon name="battery"></ui-icon><ui-icon name="speaker"></ui-icon><ui-icon name="wifi"></ui-icon></div>
        <div class="lang">ع<br>١٠١</div>
        <ui-icon name="up"></ui-icon>
        <div class="apps">${this.apps.map(a => `<button type="button" aria-label="${a}"><ui-icon name="${a}"></ui-icon></button>`).join('')}</div>
        <label class="search"><ui-icon name="shark"></ui-icon><input type="text" placeholder="بحث" aria-label="بحث"><ui-icon name="search"></ui-icon></label>
        <button type="button" aria-label="Start"><ui-icon name="windows"></ui-icon></button>
        <button type="button" class="weather"><span>39°C<small>ضباب</small></span><ui-icon name="fog"></ui-icon></button>
        <span class="badge">٢</span>
        `;
    }
}
customElements.define('task-bar', TaskBar);

// Translucent site mark laid over the bottom of the window
class WaterMark extends HTMLElement {
    constructor() {
        super();
        this.attachShadow({ mode: 'open' });
    }

    connectedCallback() {
        this.shadowRoot.innerHTML = `
        <style>
            :host { position: absolute; left: 50%; bottom: 20px; transform: translateX(-50%); display: flex; flex-direction: column; align-items: center; pointer-events: none; }
            .ar { font: 700 64px/68px "DejaVu Sans", sans-serif; color: rgba(170, 170, 170, .28); }
            .en { font: 700 35px/40px "Open Sans", sans-serif; color: rgba(160, 160, 160, .5); }
        </style>
        <span class="ar">مستقل</span>
        <span class="en">mostaql.com</span>
        `;
    }
}
customElements.define('water-mark', WaterMark);
</script>
</body>
</html>
